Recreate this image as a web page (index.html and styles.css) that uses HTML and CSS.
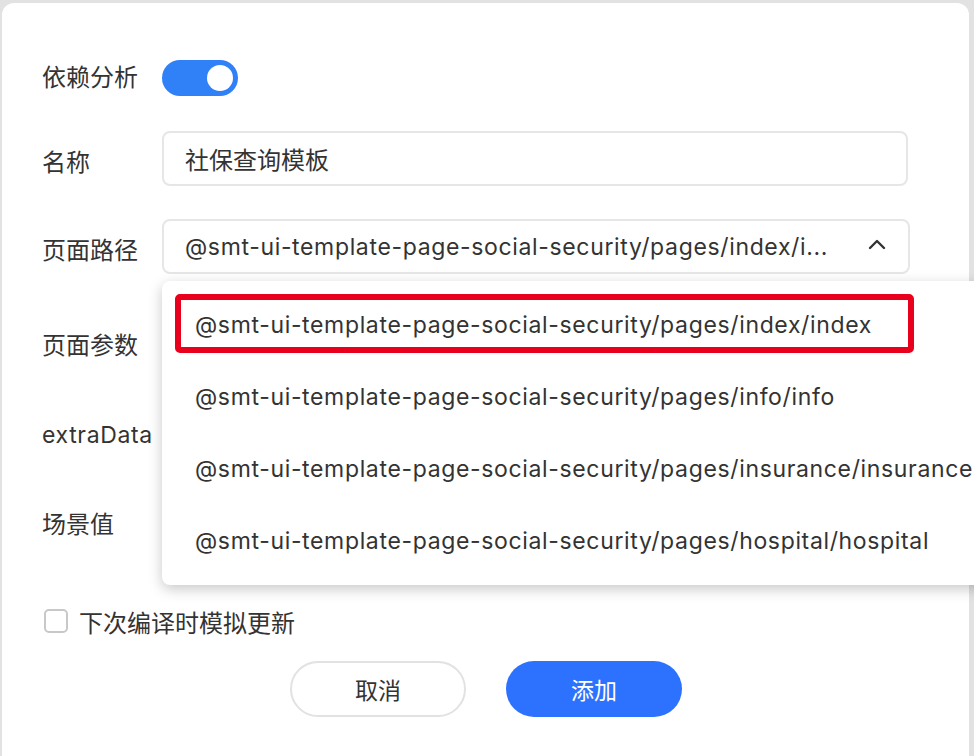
FILE: index.html
```html
<!DOCTYPE html>
<html lang="zh-CN">
<head>
<meta charset="utf-8">
<link rel="stylesheet" href="styles.css">
</head>
<body>
<div class="dialog">
  <div class="form">
    <div class="row row-toggle">
      <div class="label">依赖分析</div>
      <div class="toggle"><span class="knob"></span></div>
    </div>
    <div class="row row-field">
      <div class="label">名称</div>
      <div class="input">社保查询模板</div>
    </div>
    <div class="row row-field">
      <div class="label">页面路径</div>
      <div class="select">
        <span class="select-text">@smt-ui-template-page-social-security/pages/index/i...</span>
        <svg class="chevron" width="18" height="12" viewBox="0 0 18 12"><path d="M2 10 L9 3 L16 10" fill="none" stroke="#333" stroke-width="2.4" stroke-linecap="round" stroke-linejoin="round"/></svg>
        <div class="dropdown">
          <div class="option selected">@smt-ui-template-page-social-security/pages/index/index<span class="highlight"></span></div>
          <div class="option">@smt-ui-template-page-social-security/pages/info/info</div>
          <div class="option">@smt-ui-template-page-social-security/pages/insurance/insurance</div>
          <div class="option">@smt-ui-template-page-social-security/pages/hospital/hospital</div>
        </div>
      </div>
    </div>
    <div class="row row-params">
      <div class="label">页面参数</div>
    </div>
    <div class="row row-extra">
      <div class="label latin">extraData</div>
    </div>
    <div class="row row-scene">
      <div class="label">场景值</div>
    </div>
    <div class="row row-check">
      <span class="checkbox"></span>
      <span class="check-label">下次编译时模拟更新</span>
    </div>
    <div class="actions">
      <button class="btn btn-cancel">取消</button>
      <button class="btn btn-primary">添加</button>
    </div>
  </div>
</div>
</body>
</html>
```
FILE: styles.css
```css
html, body {
  margin: 0;
  padding: 0;
}
body {
  width: 974px;
  height: 756px;
  overflow: hidden;
  background: #e2e2e2;
  font-family: "Noto Sans CJK SC", "Noto Sans", sans-serif;
  color: #333;
}
.dialog {
  margin: 3px 0 0 2px;
  width: 967px;
  height: 753px;
  background: #fff;
  border-radius: 12px 12px 0 0;
  box-sizing: border-box;
  padding: 57px 0 0 40px;
}
.form {
  display: flex;
  flex-direction: column;
}
.row {
  display: flex;
  align-items: center;
  position: relative;
}
.label {
  width: 120px;
  font-size: 24px;
  line-height: 30px;
  color: #333;
  white-space: nowrap;
}
.label.latin {
  font-family: Inter, "Noto Sans CJK SC", sans-serif;
  font-size: 23px;
  letter-spacing: 0.65px;
}
.row-toggle { height: 36px; }
.row-toggle .label { margin-top: -4px; }
.row-field { height: 55px; margin-top: 35px; }
.row-field + .row-field { margin-top: 33px; }
.row-field .label { margin-top: 4px; }
.row-params { height: 74px; margin-top: 33px; }
.row-extra { height: 42px; margin-top: 33px; }
.row-scene { height: 68px; margin-top: 33px; }
.row-check { height: 24px; margin-top: 52px; }

.toggle {
  width: 76px;
  height: 36px;
  border-radius: 18px;
  background: #3080f8;
  position: relative;
}
.knob {
  position: absolute;
  right: 5px;
  top: 5px;
  width: 26px;
  height: 26px;
  border-radius: 50%;
  background: #fff;
}
.input, .select {
  width: 746px;
  height: 55px;
  box-sizing: border-box;
  border: 2px solid #e6e6e6;
  border-radius: 8px;
  padding-left: 21px;
  display: flex;
  align-items: center;
  font-size: 24px;
  color: #333;
}
.select {
  width: 748px;
  position: relative;
  justify-content: space-between;
  padding-right: 22px;
  font-family: Inter, "Noto Sans CJK SC", sans-serif;
  font-size: 23px;
  letter-spacing: 0.65px;
}
.select-text {
  white-space: nowrap;
}
.chevron {
  margin-top: -6px;
}
.dropdown {
  position: absolute;
  left: -2px;
  top: 60px;
  width: 840px;
  background: #fff;
  border-radius: 8px;
  box-shadow: 0 4px 14px rgba(0, 0, 0, 0.22);
  padding: 8px 0;
  z-index: 5;
  letter-spacing: 0.65px;
}
.option {
  position: relative;
  height: 72px;
  display: flex;
  align-items: center;
  padding-left: 33px;
  font-family: Inter, "Noto Sans CJK SC", sans-serif;
  font-size: 23px;
  color: #333;
  white-space: nowrap;
}
.highlight {
  position: absolute;
  left: 13px;
  top: 5px;
  width: 739px;
  height: 59px;
  box-sizing: border-box;
  border: 6px solid #e8001c;
  border-radius: 5px;
}
.checkbox {
  width: 24px;
  height: 24px;
  box-sizing: border-box;
  border: 2px solid #c8c8c8;
  border-radius: 5px;
  margin-left: 2px;
}
.check-label {
  margin-left: 11px;
  font-size: 24px;
  color: #333;
}
.actions {
  display: flex;
  gap: 40px;
  margin-top: 28px;
  margin-left: 248px;
}
.btn {
  width: 176px;
  height: 56px;
  border-radius: 28px;
  font-family: "Noto Sans CJK SC", sans-serif;
  font-size: 23px;
  box-sizing: border-box;
  cursor: pointer;
}
.btn-cancel {
  background: #fff;
  border: 2px solid #e2e2e2;
  color: #333;
}
.btn-primary {
  background: #2d72fe;
  border: none;
  color: #fff;
}
```
